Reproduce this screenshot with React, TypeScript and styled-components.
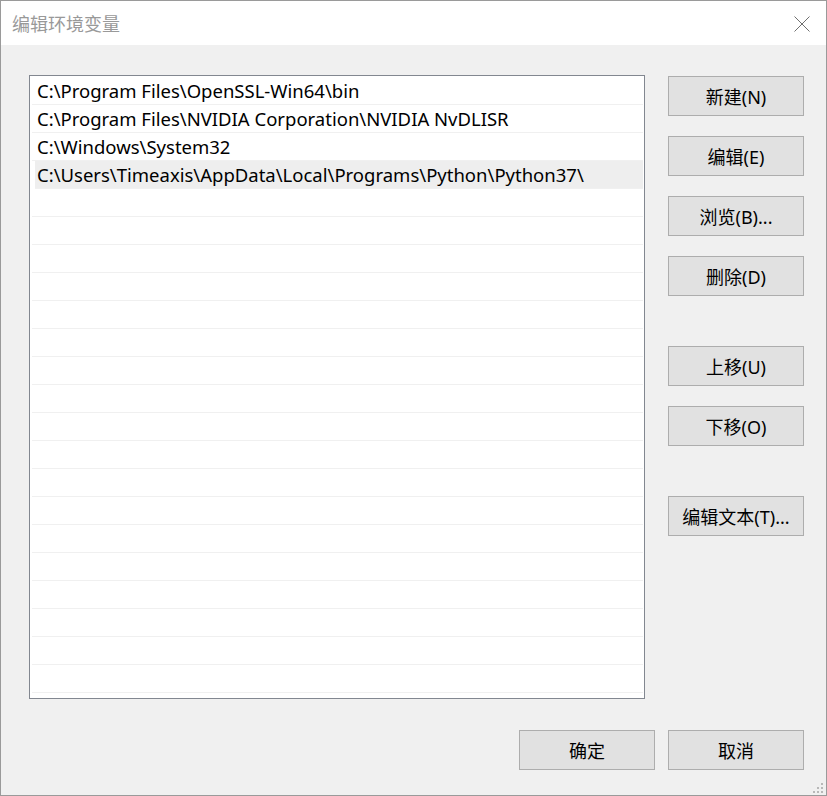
import React from 'react';
import styled, { createGlobalStyle } from 'styled-components';

const GlobalStyle = createGlobalStyle`
	html, body { margin: 0; padding: 0; background: #f0f0f0; }
	body {
		font-family: 'Noto Sans', 'Noto Sans CJK SC', sans-serif;
		-webkit-font-smoothing: antialiased;
	}
	* { box-sizing: border-box; }
`;

const paths = [
	'C:\\Program Files\\OpenSSL-Win64\\bin',
	'C:\\Program Files\\NVIDIA Corporation\\NVIDIA NvDLISR',
	'C:\\Windows\\System32',
	'C:\\Users\\Timeaxis\\AppData\\Local\\Programs\\Python\\Python37\\'
];

const ROW_COUNT = 23;
const SELECTED = 3;

function App() {
	const rows = Array.from({ length: ROW_COUNT }, (_, i) => paths[i] ?? '');

	return (
		<>
			<GlobalStyle />
			<Window>
				<TitleBar>
					<Title>编辑环境变量</Title>
					<CloseButton aria-label='close'>
						<svg width='16' height='16' viewBox='0 0 16 16'>
							<path d='M0.5 0.5 L15.5 15.5 M15.5 0.5 L0.5 15.5' stroke='#6f6f6f' strokeWidth='1' fill='none' />
						</svg>
					</CloseButton>
				</TitleBar>
				<Body>
					<Main>
						<ListBox>
							{rows.map((text, i) => (
								<Row key={i} $selected={i === SELECTED}>{text}</Row>
							))}
						</ListBox>
						<Side>
							<Group>
								<Button>新建(N)</Button>
								<Button>编辑(E)</Button>
								<Button>浏览(B)...</Button>
								<Button>删除(D)</Button>
							</Group>
							<Group>
								<Button>上移(U)</Button>
								<Button>下移(O)</Button>
							</Group>
							<Group>
								<Button>编辑文本(T)...</Button>
							</Group>
						</Side>
					</Main>
					<Footer>
						<Button>确定</Button>
						<Button>取消</Button>
					</Footer>
					<Grip>
						<svg width='10' height='10' viewBox='0 0 10 10'>
							<rect x='8' y='0' width='2' height='2' fill='#b8b8b8' />
							<rect x='4' y='4' width='2' height='2' fill='#b8b8b8' />
							<rect x='8' y='4' width='2' height='2' fill='#b8b8b8' />
							<rect x='0' y='8' width='2' height='2' fill='#b8b8b8' />
							<rect x='4' y='8' width='2' height='2' fill='#b8b8b8' />
							<rect x='8' y='8' width='2' height='2' fill='#b8b8b8' />
						</svg>
					</Grip>
				</Body>
			</Window>
		</>
	);
}

const Window = styled.div`
	position: relative;
	display: flex;
	flex-direction: column;
	width: 827px;
	height: 796px;
	border: 1px solid #9a9a9a;
	background: #f0f0f0;
	overflow: hidden;
`;

const TitleBar = styled.div`
	display: flex;
	align-items: center;
	justify-content: space-between;
	height: 44px;
	padding: 0 16px 0 11px;
	background: #ffffff;
`;

const Title = styled.span`
	font-size: 18px;
	color: #999999;
	padding-bottom: 1px;
`;

const CloseButton = styled.span`
	display: flex;
	width: 16px;
	height: 16px;
	margin-top: 1px;
`;

const Body = styled.div`
	position: relative;
	flex: 1;
	display: flex;
	flex-direction: column;
	padding: 30px 22px 0 28px;
`;

const Main = styled.div`
	display: flex;
	gap: 23px;
`;

const ListBox = styled.div`
	width: 616px;
	height: 624px;
	padding: 1px 1px 0 1px;
	border: 1px solid #828790;
	background: #ffffff;
	overflow: hidden;
`;

const Row = styled.div<{ $selected: boolean }>`
	display: flex;
	align-items: center;
	height: 28px;
	border-bottom: 1px solid #f0f0f0;
	margin-left: ${p => p.$selected ? '4px' : '1px'};
	padding-left: ${p => p.$selected ? '2px' : '5px'};
	background: ${p => p.$selected ? '#eeeeee' : '#ffffff'};
	font-size: 18.5px;
	color: #000000;
	white-space: nowrap;
`;

const Side = styled.div`
	display: flex;
	flex-direction: column;
	gap: 50px;
	padding-top: 1px;
`;

const Group = styled.div`
	display: flex;
	flex-direction: column;
	gap: 20px;
`;

const Button = styled.div`
	display: flex;
	align-items: center;
	justify-content: center;
	width: 136px;
	height: 40px;
	border: 1px solid #adadad;
	background: #e1e1e1;
	font-size: 18px;
	color: #000000;
`;

const Footer = styled.div`
	display: flex;
	justify-content: flex-end;
	gap: 13px;
	margin-top: 31px;
`;

const Grip = styled.div`
	position: absolute;
	right: 3px;
	bottom: 2px;
	display: flex;
`;

export default App;
